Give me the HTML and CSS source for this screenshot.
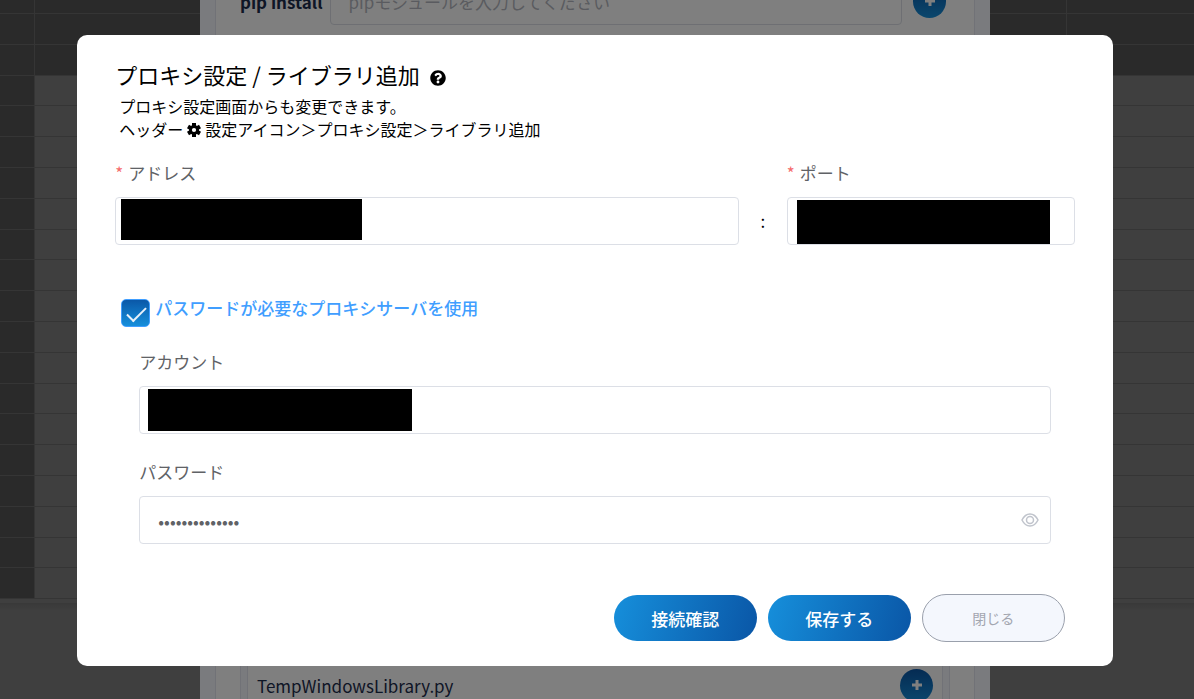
FILE: index.html
```html
<!DOCTYPE html>
<html lang="ja">
<head>
    <meta charset="UTF-8">
    <meta name="viewport" content="width=device-width, initial-scale=1.0">
    <title>プロキシ設定</title>
    <link rel="stylesheet" href="styles.css">
</head>
<body>
    <!-- Spreadsheet -->
    <div class="sheet">
        <div class="sheet-row sheet-head sheet-top"><span></span><span></span><span class="col-last"></span></div>
        <div class="sheet-row sheet-head"><span></span><span></span><span class="col-last"></span></div>
        <div class="sheet-row sheet-head"><span></span><span></span></div>
        <div class="sheet-row"><span></span><span></span></div>
        <div class="sheet-row"><span></span><span></span></div>
        <div class="sheet-row"><span></span><span></span></div>
        <div class="sheet-row"><span></span><span></span></div>
        <div class="sheet-row"><span></span><span></span></div>
        <div class="sheet-row"><span></span><span></span></div>
        <div class="sheet-row"><span></span><span></span></div>
        <div class="sheet-row"><span></span><span></span></div>
        <div class="sheet-row"><span></span><span></span></div>
        <div class="sheet-row"><span></span><span></span></div>
        <div class="sheet-row"><span></span><span></span></div>
        <div class="sheet-row"><span></span><span></span></div>
        <div class="sheet-row"><span></span><span></span></div>
        <div class="sheet-row"><span></span><span></span></div>
        <div class="sheet-row"><span></span><span></span></div>
        <div class="sheet-row"><span></span><span></span></div>
        <div class="sheet-row"><span></span><span></span></div>
    </div>
    <div class="sheet-shadow"></div>

    <!-- Library dialog -->
    <div class="backdrop library-layer">
        <div class="library">
            <div class="library-body">
                <div class="pip-row">
                    <label for="pip">pip install</label>
                    <input type="text" id="pip" class="input" placeholder="pipモジュールを入力してください">
                    <button class="add-btn" aria-label="追加">
                        <svg viewBox="0 0 12 12"><path d="M6 1v10M1 6h10"/></svg>
                    </button>
                </div>
                <div class="file-list">
                    <div class="file-row">
                        <span>TempWindowsLibrary.py</span>
                        <button class="add-btn" aria-label="追加">
                            <svg viewBox="0 0 12 12"><path d="M6 1v10M1 6h10"/></svg>
                        </button>
                    </div>
                </div>
            </div>
        </div>
    </div>

    <!-- Proxy dialog -->
    <div class="backdrop modal-layer">
        <form class="modal">
            <h2>
                プロキシ設定 / ライブラリ追加
                <svg class="icon-help" viewBox="0 0 512 512"><path d="M504 256c0 136.997-111.043 248-248 248S8 392.997 8 256C8 119.083 119.043 8 256 8s248 111.083 248 248zM262.655 90c-54.497 0-89.255 22.957-116.549 63.758-3.536 5.286-2.353 12.415 2.715 16.258l34.699 26.31c5.205 3.947 12.621 3.008 16.665-2.122 17.864-22.658 30.113-35.797 57.303-35.797 20.429 0 45.698 13.148 45.698 32.958 0 14.976-12.363 22.667-32.534 33.976C247.128 238.528 216 254.941 216 296v4c0 6.627 5.373 12 12 12h56c6.627 0 12-5.373 12-12v-1.333c0-28.462 83.186-29.647 83.186-106.667 0-58.002-60.165-102-116.531-102zM256 338c-25.365 0-46 20.635-46 46 0 25.364 20.635 46 46 46s46-20.636 46-46c0-25.365-20.635-46-46-46z"/></svg>
            </h2>
            <div class="note">
                <p>プロキシ設定画面からも変更できます。</p>
                <p>ヘッダー<svg class="icon-gear" viewBox="0 0 14 14"><g stroke="#000" stroke-width="4"><path d="M7 0v14M1 3.5l12 7M1 10.5l12-7"/></g><circle cx="7" cy="7" r="3.6" fill="#fff" stroke="#000" stroke-width="3"/></svg>設定アイコン＞プロキシ設定＞ライブラリ追加</p>
            </div>

            <div class="server">
                <div class="form-item">
                    <label for="address" class="required">アドレス</label>
                    <div class="field">
                        <input type="text" id="address" class="input">
                        <span class="mask mask-address"></span>
                    </div>
                </div>
                <span class="colon">:</span>
                <div class="form-item">
                    <label for="port" class="required">ポート</label>
                    <div class="field">
                        <input type="text" id="port" class="input">
                        <span class="mask mask-port"></span>
                    </div>
                </div>
            </div>

            <div class="check-row">
                <input type="checkbox" id="useAuth" checked>
                <label for="useAuth">パスワードが必要なプロキシサーバを使用</label>
            </div>

            <div class="auth">
                <div class="form-item">
                    <label for="account">アカウント</label>
                    <div class="field">
                        <input type="text" id="account" class="input">
                        <span class="mask mask-account"></span>
                    </div>
                </div>
                <div class="form-item">
                    <label for="password">パスワード</label>
                    <div class="field">
                        <input type="password" id="password" class="input" value="passwordpasswo">
                        <button type="button" class="eye-btn" aria-label="表示">
                            <svg viewBox="0 0 18 14"><path d="M1 7C3 3 6 1 9 1s6 2 8 6c-2 4-5 6-8 6S3 11 1 7z"/><circle cx="9" cy="7" r="3.5"/></svg>
                        </button>
                    </div>
                </div>
            </div>

            <div class="actions">
                <button type="button" class="btn btn-primary">接続確認</button>
                <button type="button" class="btn btn-primary">保存する</button>
                <button type="button" class="btn btn-close">閉じる</button>
            </div>
        </form>
    </div>
</body>
</html>
```

FILE: styles.css
```css
* {
    box-sizing: border-box;
}

body {
    margin: 0;
    height: 100vh;
    overflow: hidden;
    background-color: #fff;
    font-family: "Noto Sans CJK JP", sans-serif;
    font-size: 17px;
}

h2, p {
    margin: 0;
}

button, input {
    font-family: inherit;
}

/* spreadsheet */
.sheet {
    display: flex;
    flex-direction: column;
    height: calc(100vh - 100px);
}

.sheet-row {
    display: flex;
    flex: 1;
    border-bottom: 1px solid #d4d4d4;
}

.sheet-row span {
    flex: 1;
}

.sheet-row span:first-child {
    flex: 0 0 35px;
    border-right: 1px solid #d4d4d4;
    background-color: #a9a9a9;
}

.sheet-row .col-last {
    flex: 0 0 128px;
    border-left: 1px solid #d4d4d4;
}

.sheet-head {
    background-color: #a9a9a9;
}

.sheet-top {
    flex: 0 0 14px;
}

.sheet-shadow {
    height: 8px;
    margin-top: 4px;
    background: linear-gradient(#e4e4e4, #fff);
}

/* dialogs */
.backdrop {
    position: fixed;
    inset: 0;
    display: flex;
    justify-content: center;
    padding-right: 4px;
    background-color: rgba(0, 0, 0, 0.5);
    overflow: hidden;
}

.library-layer {
    align-items: center;
}

.library {
    flex: none;
    width: 790px;
    height: calc(100vh + 46px);
    padding: 0 15px;
    background-color: #f4f6fd;
    color: #1c2c4c;
}

.library-body {
    display: flex;
    flex-direction: column;
    justify-content: space-between;
    height: 100%;
    padding: 0 24px;
    border: solid #e3e5ee;
    border-width: 0 1px;
    background-color: #fff;
}

.pip-row {
    display: flex;
    align-items: center;
    gap: 7px;
}

.pip-row label {
    flex: none;
    font-weight: bold;
}

.pip-row .input {
    flex: 1;
}

.pip-row .add-btn {
    margin: 0 4px;
}

.file-list {
    padding: 0 6px;
    border: solid #e3e5ee;
    border-width: 0 1px;
    background-color: #f4f6fd;
}

.file-row {
    display: flex;
    align-items: center;
    justify-content: space-between;
    height: 200px;
    padding: 126px 9px 0 9px;
    border: solid #e3e5ee;
    border-width: 0 1px;
    background-color: #fff;
}

.add-btn {
    flex: none;
    width: 33px;
    height: 33px;
    padding: 0;
    border: none;
    border-radius: 50%;
    background: linear-gradient(#0a56a6, #168fdb);
}

.add-btn svg {
    display: block;
    width: 12px;
    height: 12px;
    margin: 0 auto;
    fill: none;
    stroke: #fff;
    stroke-width: 3;
}

.modal-layer {
    align-items: flex-start;
    padding-top: 35px;
}

.modal {
    width: 87%;
    padding: 26px 38px 24px 38px;
    border-radius: 10px;
    background-color: #fff;
    color: #000;
}

.modal h2 {
    font-size: 22px;
    font-weight: normal;
    line-height: 26px;
}

.icon-help {
    width: 16px;
    height: 16px;
    margin-left: 5px;
    vertical-align: middle;
}

.note {
    margin: 8px 0 20px 0;
    padding-left: 4px;
    font-size: 16px;
    line-height: 23px;
}

.note p {
    display: flex;
    align-items: center;
}

.icon-gear {
    width: 14px;
    height: 14px;
    margin: 0 4px;
}

/* form */
.server {
    display: grid;
    grid-template-columns: 65% 5% 30%;
}

.form-item label {
    display: block;
    margin-bottom: 12px;
    color: #606266;
    line-height: 24px;
}

.required::before {
    content: "*";
    margin-right: 5px;
    color: #f56c6c;
}

.field {
    position: relative;
}

.input {
    display: block;
    width: 100%;
    height: 48px;
    padding: 0 18px;
    border: 1px solid #dcdfe6;
    border-radius: 4px;
    background-color: #fff;
    color: #606266;
    font-size: 17px;
    outline: none;
}

.input::placeholder {
    color: #b4b7c0;
}

/* redacted values */
.mask {
    position: absolute;
    background-color: #000;
}

.mask-address {
    top: 2px;
    left: 6px;
    width: 241px;
    height: 41px;
}

.mask-port {
    top: 3px;
    left: 10px;
    width: 253px;
    height: 44px;
}

.mask-account {
    top: 3px;
    left: 9px;
    width: 264px;
    height: 42px;
}

.colon {
    align-self: end;
    line-height: 48px;
    text-align: center;
}

.check-row {
    display: flex;
    align-items: flex-start;
    gap: 5px;
    margin: 52px 0 23px 6px;
}

.check-row input {
    appearance: none;
    width: 29px;
    height: 28px;
    margin: 2px 0 0 0;
    border: 1px solid #409eff;
    border-radius: 5px;
    background: linear-gradient(#0a58a8, #168fdb);
}

.check-row input:checked::after {
    content: "";
    display: block;
    width: 17px;
    height: 8px;
    margin: 7px 0 0 5px;
    border: solid #e8f1fa;
    border-width: 0 0 2px 2px;
    transform: rotate(-45deg);
}

.check-row label {
    color: #409eff;
    font-weight: 500;
    line-height: 22px;
}

.auth {
    display: grid;
    gap: 26px;
    padding: 0 24px;
}

.eye-btn {
    position: absolute;
    top: 0;
    right: 12px;
    height: 48px;
    padding: 0;
    border: none;
    background: none;
}

.eye-btn svg {
    display: block;
    width: 18px;
    height: 14px;
    fill: none;
    stroke: #c0c4cc;
    stroke-width: 1.5;
}

.actions {
    display: flex;
    align-items: center;
    justify-content: flex-end;
    gap: 11px;
    margin-top: 50px;
    padding-right: 10px;
}

.btn {
    width: 143px;
    height: 46px;
    padding: 0;
    border: none;
    border-radius: 24px;
    font-size: 17px;
    font-weight: 500;
    cursor: pointer;
}

.btn-primary {
    background: linear-gradient(105deg, #168fdb, #0a56a6);
    color: #fff;
}

.btn-close {
    height: 48px;
    border: 1px solid #9aa0ac;
    background-color: #f4f7fd;
    color: #a3a6b0;
    font-size: 14px;
    font-weight: normal;
}
```
